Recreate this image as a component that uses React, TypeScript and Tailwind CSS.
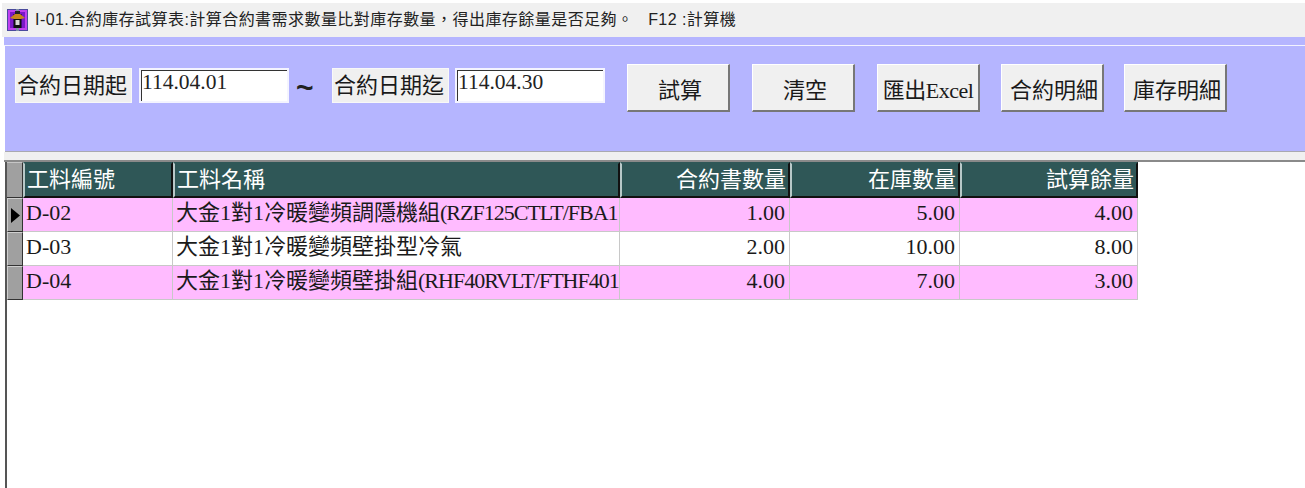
const serif = "[font-family:'Liberation_Serif','Noto_Sans_CJK_TC',serif]";

function Icon() {
  return (
    <svg width="21" height="22" viewBox="0 0 21 22" className="shrink-0">
      <rect x="0" y="0" width="21" height="22" fill="#4a4a9c" />
      <rect x="1" y="1" width="19" height="20" fill="#c040f0" />
      <rect x="3" y="3" width="15" height="16" fill="#7a18c8" />
      <rect x="6" y="5" width="9" height="14" fill="#3c0c70" />
      <rect x="9" y="0" width="3" height="22" fill="#7f8fa8" />
      <path d="M3 9 L8 5 H13 L18 9 L14 10 H7 Z" fill="#c8861a" />
      <path d="M8 2 H13 V5 H8 Z" fill="#222" />
      <rect x="7" y="10" width="7" height="9" fill="#111" />
      <rect x="8.5" y="11" width="4" height="5" fill="#d8d8d8" />
    </svg>
  );
}

function Label({ children, w }: { children: string; w: string }) {
  return (
    <div className={`${w} h-[35px] bg-[#f0f0f0] border border-[#f8f8f8] text-[22px] leading-[33px] pr-[3px] text-center text-[#1a1a1a] whitespace-nowrap ${serif}`}>
      {children}
    </div>
  );
}

function Field({ value }: { value: string }) {
  return (
    <div className={`w-[150px] h-[35px] bg-white border-2 border-[#f4f4ff] shadow-[inset_1px_1px_0_#333] text-[21.5px] leading-[24px] pl-[1px] text-[#222] ${serif}`}>
      {value}
    </div>
  );
}

function Btn({ children, w = "w-[103px]", tight = false }: { children: string; w?: string; tight?: boolean }) {
  return (
    <button className={`${w} h-[48px] pt-[5px] bg-[#f0f0f0] border-t border-l border-t-white border-l-white border-r-2 border-b-2 border-r-[#777] border-b-[#777] text-[22px] text-[#1a1a1a] whitespace-nowrap ${tight ? "tracking-[-0.5px]" : "pl-[4px]"} ${serif}`}>
      {children}
    </button>
  );
}

const cols = [
  { w: "w-[150px]", right: false },
  { w: "w-[447px]", right: false },
  { w: "w-[170px]", right: true },
  { w: "w-[170px]", right: true },
  { w: "w-[178px]", right: true },
];

const headers = ["工料編號", "工料名稱", "合約書數量", "在庫數量", "試算餘量"];

const rows = [
  { bg: "bg-[#ffbbff]", name: "大金1對1冷暖變頻調隱機組", model: "(RZF125CTLT/FBA1", cells: ["D-02", "", "1.00", "5.00", "4.00"], current: true },
  { bg: "bg-white", name: "大金1對1冷暖變頻壁掛型冷氣", model: "", cells: ["D-03", "", "2.00", "10.00", "8.00"], current: false },
  { bg: "bg-[#ffbbff]", name: "大金1對1冷暖變頻壁掛組", model: "(RHF40RVLT/FTHF401", cells: ["D-04", "", "4.00", "7.00", "3.00"], current: false },
];

export default function App() {
  return (
    <div className="w-[1305px] h-[488px] bg-white overflow-hidden flex flex-col pt-[3px]">
      <div className="h-[34px] ml-[2px] bg-[#f0f0f0] flex items-center pl-[5px] gap-[7px] shrink-0">
        <Icon />
        <span className="text-[16px] text-[#222] whitespace-pre [font-family:'Liberation_Sans','Noto_Sans_CJK_TC',sans-serif] tracking-[0.45px]">
          I-01.合約庫存試算表:計算合約書需求數量比對庫存數量，得出庫存餘量是否足夠。   F12 :計算機
        </span>
      </div>
      <div className="ml-[4px] h-[8px] bg-[#b5b5ff] shrink-0" />
      <div className="h-[1px] ml-[4px] bg-[#f2f2ff] shrink-0" />
      <div className="ml-[5px] h-[106px] bg-[#b5b5ff] border-b border-b-[#a9a9b0] shrink-0 flex items-start pl-[10px] pt-[22px]">
        <Label w="w-[117px]">合約日期起</Label>
        <div className="ml-[7px]"><Field value="114.04.01" /></div>
        <div className="w-[43px] pl-[7px] text-left text-[30px] font-bold leading-[40px] text-[#222] [font-family:'Liberation_Sans',sans-serif]">~</div>
        <Label w="w-[117px]">合約日期迄</Label>
        <div className="ml-[6px]"><Field value="114.04.30" /></div>
        <div className="-mt-[4px] ml-[22px] flex gap-[22px]">
          <Btn>試算</Btn>
          <Btn>清空</Btn>
          <Btn tight>匯出Excel</Btn>
          <div className="-ml-[1px] flex gap-[20px]">
            <Btn>合約明細</Btn>
            <Btn>庫存明細</Btn>
          </div>
        </div>
      </div>
      <div className="ml-[4px] h-[8px] bg-[#f0f0f0] border-b-2 border-b-[#8a8a8a] shrink-0 box-content" />
      <div className={`flex-1 ml-[5px] border-l-2 border-l-[#555] ${serif}`}>
        <div className="flex h-[36px]">
          <div className="w-[16px] bg-[#a0a0a0] border border-[#333] border-l-0 border-t-white/40" />
          {headers.map((h, i) => (
            <div
              key={h}
              className={`${cols[i].w} shrink-0 bg-[#2f5757] text-white text-[22px] leading-[31px] px-[2px] border-2 border-t-[#2f5757] border-l-[#b8c8c8] border-r-[#111] border-b-[#111] whitespace-nowrap overflow-hidden ${cols[i].right ? "text-right" : "text-left"}`}
            >
              {h}
            </div>
          ))}
        </div>
        {rows.map((r) => (
          <div key={r.cells[0]} className="flex h-[34px]">
            <div className="w-[16px] bg-[#a0a0a0] border-r border-b border-r-[#333] border-b-[#333] border-l border-l-white/50 border-t border-t-white/50 flex items-center">
              {r.current && (
                <svg width="9" height="15" viewBox="0 0 9 15" className="ml-[3px]">
                  <path d="M0 0 L9 7.5 L0 15 Z" fill="#000" />
                </svg>
              )}
            </div>
            {r.cells.map((c, i) => (
              <div
                key={i}
                className={`${cols[i].w} shrink-0 ${r.bg} text-[#1a1a1a] text-[22px] leading-[30px] pl-[3px] pr-[4px] border-r border-b border-r-[#c8c8c8] border-b-[#c8c8c8] whitespace-nowrap overflow-hidden ${cols[i].right ? "text-right" : "text-left"}`}
              >
                {i === 1 ? (
                  <>
                    {r.name}
                    <span className="tracking-[-1px]">{r.model}</span>
                  </>
                ) : (
                  c
                )}
              </div>
            ))}
          </div>
        ))}
      </div>
    </div>
  );
}
